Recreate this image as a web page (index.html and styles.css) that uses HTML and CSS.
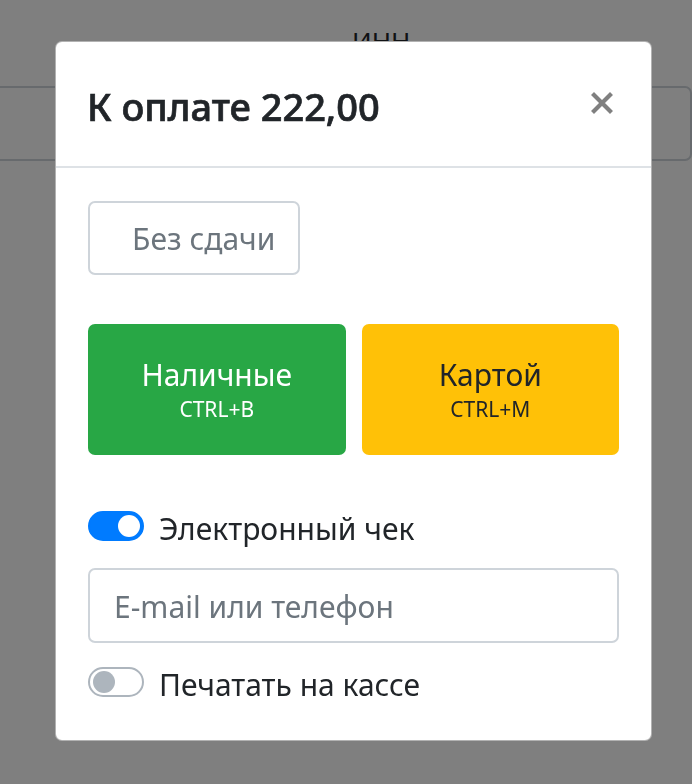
FILE: index.html
```html
<!DOCTYPE html>
<html lang="ru">

<head>
    <meta charset="UTF-8">
    <meta name="viewport" content="width=device-width, initial-scale=1.0">
    <title>Оплата</title>
    <link rel="stylesheet" href="styles.css">
</head>

<body>
    <!-- страница под модалкой -->
    <div class="page">
        <div class="labels">
            <div class="label-left"></div>
            <div class="label-right">ИНН</div>
        </div>
        <div class="fields">
            <div class="field field-left">Магазин</div>
            <div class="field field-right"></div>
        </div>
    </div>

    <div class="backdrop"></div>

    <div class="modal">
        <div class="modal-head">
            <div class="modal-title">К оплате 222,00</div>
            <div class="close">
                <svg width="22" height="22" viewBox="0 0 22 22">
                    <path d="M3 3 L19 19 M19 3 L3 19" stroke="#808080" stroke-width="4.2" stroke-linecap="square" fill="none" />
                </svg>
            </div>
        </div>
        <div class="modal-body">
            <div class="no-change">Без сдачи</div>

            <div class="pay-btns">
                <div class="pay-btn cash">
                    <div class="pay-name">Наличные</div>
                    <div class="pay-key">CTRL+B</div>
                </div>
                <div class="pay-btn card">
                    <div class="pay-name">Картой</div>
                    <div class="pay-key">CTRL+M</div>
                </div>
            </div>

            <div class="switch-row">
                <span class="switch on"><span class="knob"></span></span>
                <span class="switch-label">Электронный чек</span>
            </div>
            <div class="contact-input">E-mail или телефон</div>
            <div class="switch-row second">
                <span class="switch"><span class="knob"></span></span>
                <span class="switch-label">Печатать на кассе</span>
            </div>
        </div>
    </div>
</body>

</html>
```

FILE: styles.css
```css
* {
    padding: 0;
    margin: 0;
    box-sizing: border-box;
}

body {
    width: 692px;
    height: 784px;
    overflow: hidden;
    background: #fff;
    font-family: "Noto Sans", "Open Sans", sans-serif;
    color: #212529;
}

/* фон */
.page {
    padding-top: 26px;
}

.page .labels {
    display: flex;
    margin-left: -220px;
    gap: 10px;
    height: 60px;
}

.page .label-left {
    width: 550px;
}

.page .label-right {
    padding-left: 12px;
    font-size: 26px;
    line-height: 30px;
}

.page .fields {
    display: flex;
    margin-left: -220px;
    gap: 10px;
}

.page .field {
    height: 75px;
    border: 2px solid #ced4da;
    border-radius: 7px;
    font-size: 26px;
    line-height: 71px;
    color: #1f3550;
}

.page .field-left {
    width: 550px;
    text-align: right;
    padding-right: 548px;
}

.page .field-right {
    width: 350px;
}

.backdrop {
    position: fixed;
    top: 0;
    left: 0;
    width: 100%;
    height: 100%;
    background: rgba(0, 0, 0, .5);
}

/* модалка */
.modal {
    position: absolute;
    top: 41px;
    left: 55px;
    width: 597px;
    height: 700px;
    border: 1px solid rgba(0, 0, 0, .3);
    border-radius: 7px;
    background: #fff;
}

.modal .modal-head {
    display: flex;
    align-items: center;
    justify-content: space-between;
    height: 126px;
    padding: 3px 38px 0 31px;
    border-bottom: 2px solid #dee2e6;
}

.modal .modal-title {
    font-size: 38px;
    font-weight: 500;
    -webkit-text-stroke: 0.7px #212529;
}

.modal .close {
    width: 22px;
    height: 22px;
    margin-top: -5px;
}

.modal .close svg {
    display: block;
}

.modal .modal-body {
    padding: 33px 32px 0;
}

.no-change {
    width: 212px;
    height: 74px;
    padding: 3px 0 0 42px;
    border: 2px solid #ced4da;
    border-radius: 7px;
    font-size: 30px;
    line-height: 66px;
    color: #6c757d;
}

.pay-btns {
    display: flex;
    gap: 16px;
    margin-top: 49px;
}

.pay-btns .pay-btn {
    flex: 1;
    height: 131px;
    padding-bottom: 2px;
    border-radius: 7px;
    display: flex;
    flex-direction: column;
    align-items: center;
    justify-content: center;
}

.pay-btns .cash {
    background: #28a745;
    color: #fff;
}

.pay-btns .card {
    background: #ffc107;
    color: #212529;
}

.pay-btns .pay-name {
    font-size: 30px;
    line-height: 40px;
}

.pay-btns .pay-key {
    font-size: 21px;
    line-height: 28px;
}

.switch-row {
    display: flex;
    align-items: center;
    gap: 15px;
    height: 36px;
    margin-top: 53px;
}

.switch-row.second {
    margin-top: 21px;
}

.switch {
    position: relative;
    width: 56px;
    height: 30px;
    border: 2px solid #adb5bd;
    border-radius: 15px;
    background: #fff;
}

.switch .knob {
    position: absolute;
    top: 2px;
    left: 3px;
    width: 22px;
    height: 22px;
    border-radius: 50%;
    background: #adb5bd;
}

.switch.on {
    border-color: #007bff;
    background: #007bff;
}

.switch.on .knob {
    left: 28px;
    background: #fff;
}

.switch-label {
    padding-top: 5px;
    font-size: 30px;
}

.contact-input {
    height: 75px;
    margin-top: 24px;
    padding: 3px 0 0 24px;
    border: 2px solid #ced4da;
    border-radius: 7px;
    font-size: 30px;
    line-height: 67px;
    color: #6c757d;
}
```
